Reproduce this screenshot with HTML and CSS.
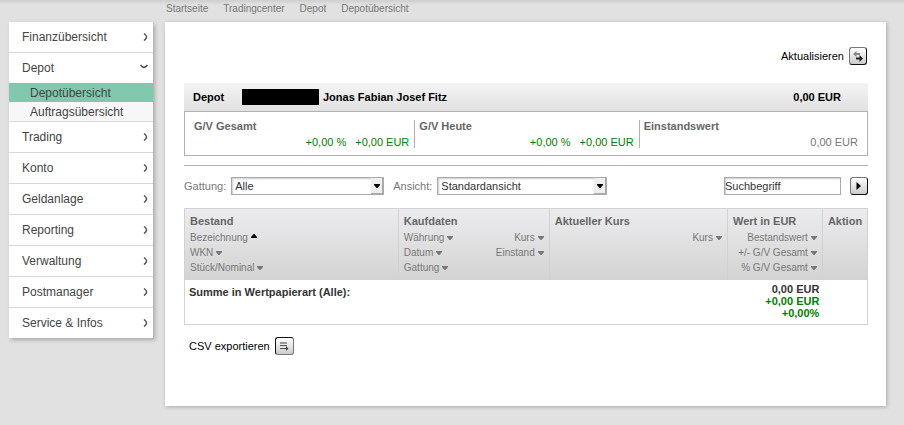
FILE: index.html
```html
<!DOCTYPE html>
<html lang="de">

<head>
    <meta charset="UTF-8">
    <title>Depotübersicht</title>
    <link rel="stylesheet" href="styles.css">
</head>

<body>
    <svg class="defs" width="0" height="0">
        <symbol id="chevron" viewBox="0 0 5 8">
            <path d="M1 0.5 Q3.6 2.5 3.6 4 Q3.6 5.5 1 7.5" fill="none" stroke="#555" stroke-width="1.5" />
        </symbol>
        <symbol id="chevron-open" viewBox="0 0 8 5">
            <path d="M0.5 1 Q2.5 3.4 4 3.4 Q5.5 3.4 7.5 1" fill="none" stroke="#444" stroke-width="1.5" />
        </symbol>
        <symbol id="down" viewBox="0 0 6 4">
            <path d="M0 0 H6 V1 L3.5 4 H2.5 L0 1 Z" fill="currentColor" />
        </symbol>
        <symbol id="up" viewBox="0 0 6 4">
            <path d="M0 4 H6 V3 L3.5 0 H2.5 L0 3 Z" fill="currentColor" />
        </symbol>
    </svg>

    <nav class="breadcrumb">
        <a href="#">Startseite</a>
        <a href="#">Tradingcenter</a>
        <a href="#">Depot</a>
        <a href="#">Depotübersicht</a>
    </nav>

    <div class="page">
        <nav class="menu">
            <ul>
                <li><a href="#">Finanzübersicht <svg class="chevron"><use href="#chevron" /></svg></a></li>
                <li>
                    <a href="#">Depot <svg class="chevron-open"><use href="#chevron-open" /></svg></a>
                    <ul class="submenu">
                        <li><a class="active" href="#">Depotübersicht</a></li>
                        <li><a href="#">Auftragsübersicht</a></li>
                    </ul>
                </li>
                <li><a href="#">Trading <svg class="chevron"><use href="#chevron" /></svg></a></li>
                <li><a href="#">Konto <svg class="chevron"><use href="#chevron" /></svg></a></li>
                <li><a href="#">Geldanlage <svg class="chevron"><use href="#chevron" /></svg></a></li>
                <li><a href="#">Reporting <svg class="chevron"><use href="#chevron" /></svg></a></li>
                <li><a href="#">Verwaltung <svg class="chevron"><use href="#chevron" /></svg></a></li>
                <li><a href="#">Postmanager <svg class="chevron"><use href="#chevron" /></svg></a></li>
                <li><a href="#">Service &amp; Infos <svg class="chevron"><use href="#chevron" /></svg></a></li>
            </ul>
        </nav>

        <main class="content">
            <div class="refresh">
                <label for="refresh">Aktualisieren</label>
                <button class="icon-button" id="refresh" type="button">
                    <svg width="12" height="12" viewBox="0 0 12 12">
                        <path d="M1 4 L4.5 1 V3 H8 V5 H4.5 V7 Z" fill="#888" />
                        <path d="M11 8.5 L7.5 5 V7.5 H4 V9.5 H7.5 V12 Z" fill="#222" />
                    </svg>
                </button>
            </div>

            <div class="depot-bar">
                <span class="depot-label">Depot</span>
                <span class="depot-number"></span>
                <span>Jonas Fabian Josef Fitz</span>
                <span class="depot-total">0,00 EUR</span>
            </div>
            <div class="summary">
                <div class="summary-cell">
                    <strong>G/V Gesamt</strong>
                    <div class="values plus"><span>+0,00 %</span><span>+0,00 EUR</span></div>
                </div>
                <div class="summary-cell">
                    <strong>G/V Heute</strong>
                    <div class="values plus"><span>+0,00 %</span><span>+0,00 EUR</span></div>
                </div>
                <div class="summary-cell">
                    <strong>Einstandswert</strong>
                    <div class="values"><span>0,00 EUR</span></div>
                </div>
            </div>

            <form class="filter">
                <label for="gattung">Gattung:</label>
                <span class="select select-gattung">
                    <select id="gattung">
                        <option>Alle</option>
                    </select>
                    <span class="select-arrow"><svg class="sort-icon"><use href="#down" /></svg></span>
                </span>
                <label for="ansicht">Ansicht:</label>
                <span class="select select-ansicht">
                    <select id="ansicht">
                        <option>Standardansicht</option>
                    </select>
                    <span class="select-arrow"><svg class="sort-icon"><use href="#down" /></svg></span>
                </span>
                <input class="search" type="text" value="Suchbegriff" aria-label="Suchbegriff">
                <button class="icon-button" type="button" aria-label="Suchen">
                    <svg width="6" height="8" viewBox="0 0 6 8">
                        <path d="M0.5 0 L5 4 L0.5 8 Z" fill="#000" />
                    </svg>
                </button>
            </form>

            <table class="positions">
                <colgroup>
                    <col class="col-bestand">
                    <col class="col-kauf">
                    <col class="col-kurs">
                    <col class="col-wert">
                    <col class="col-aktion">
                </colgroup>
                <thead>
                    <tr>
                        <th>Bestand
                            <div class="sort">
                                <a class="sorted" href="#">Bezeichnung<svg class="sort-icon"><use href="#up" /></svg></a>
                                <a href="#">WKN<svg class="sort-icon"><use href="#down" /></svg></a>
                                <a href="#">Stück/Nominal<svg class="sort-icon"><use href="#down" /></svg></a>
                            </div>
                        </th>
                        <th>Kaufdaten
                            <div class="sort-columns">
                                <div class="sort">
                                    <a href="#">Währung<svg class="sort-icon"><use href="#down" /></svg></a>
                                    <a href="#">Datum<svg class="sort-icon"><use href="#down" /></svg></a>
                                    <a href="#">Gattung<svg class="sort-icon"><use href="#down" /></svg></a>
                                </div>
                                <div class="sort right">
                                    <a href="#">Kurs<svg class="sort-icon"><use href="#down" /></svg></a>
                                    <a href="#">Einstand<svg class="sort-icon"><use href="#down" /></svg></a>
                                </div>
                            </div>
                        </th>
                        <th>Aktueller Kurs
                            <div class="sort right">
                                <a href="#">Kurs<svg class="sort-icon"><use href="#down" /></svg></a>
                            </div>
                        </th>
                        <th>Wert in EUR
                            <div class="sort right">
                                <a href="#">Bestandswert<svg class="sort-icon"><use href="#down" /></svg></a>
                                <a href="#">+/- G/V Gesamt<svg class="sort-icon"><use href="#down" /></svg></a>
                                <a href="#">% G/V Gesamt<svg class="sort-icon"><use href="#down" /></svg></a>
                            </div>
                        </th>
                        <th>Aktion</th>
                    </tr>
                </thead>
                <tbody>
                    <tr>
                        <td class="sum-label" colspan="3">Summe in Wertpapierart (Alle):</td>
                        <td class="sum">0,00 EUR<br><span class="plus">+0,00 EUR<br>+0,00%</span></td>
                        <td></td>
                    </tr>
                </tbody>
            </table>

            <div class="export">
                <label for="export">CSV exportieren</label>
                <button class="icon-button" id="export" type="button">
                    <svg width="10" height="10" viewBox="0 0 10 10">
                        <path d="M1 1 H8 V3 H1 Z" fill="#999" />
                        <path d="M1 4.5 H8 M1 7.5 H5" stroke="#555" fill="none" />
                        <path d="M5 7 H7 V5 L9.5 7.5 L7 10 V8 H5 Z" fill="#444" />
                    </svg>
                </button>
            </div>
        </main>
    </div>
</body>

</html>
```
FILE: styles.css
```css
* {
    box-sizing: border-box;
}

body {
    font-family: "Liberation Sans", Arial, sans-serif;
    font-size: 11px;
    margin: 0;
    background: #e1e1e1 linear-gradient(#cfcfcf, #e1e1e1) 0 0 / 100% 5px no-repeat;
    color: #000;
}

a {
    color: inherit;
    text-decoration: none;
}

ul {
    list-style: none;
    margin: 0;
    padding: 0;
}

.defs {
    position: absolute;
}

.breadcrumb {
    display: flex;
    gap: 15px;
    height: 22px;
    padding: 3px 0 0 166px;
    font-size: 10px;
    line-height: 12px;
    color: #777;
}

.page {
    display: flex;
    align-items: flex-start;
    gap: 12px;
    padding: 0 18px 19px 9px;
}

/* left menu */
.menu {
    width: 144px;
    flex: none;
    background-color: #fff;
    box-shadow: 2px 2px 4px rgba(0, 0, 0, 0.25);
    font-size: 12px;
    color: #444;
}

.menu > ul > li {
    border-bottom: 1px solid #d9d9d9;
}

.menu > ul > li:last-child {
    border-bottom: none;
}

.menu > ul > li > a {
    display: flex;
    justify-content: space-between;
    align-items: center;
    height: 30px;
    padding: 0 5px 0 13px;
}

.chevron {
    width: 5px;
    height: 8px;
}

.chevron-open {
    width: 8px;
    height: 5px;
    margin-bottom: 4px;
}

.submenu a {
    display: block;
    padding: 2px 0 0 21px;
    line-height: 17px;
    background-color: #f7f7f7;
}

.submenu .active {
    background-color: #80c9ae;
}

/* main area */
.content {
    flex: 1;
    min-width: 0;
    padding: 25px 18px 51px 19px;
    background-color: #fff;
    box-shadow: 1px 1px 4px rgba(0, 0, 0, 0.25);
}

.refresh,
.export {
    display: flex;
    align-items: center;
    gap: 5px;
}

.refresh {
    justify-content: flex-end;
    margin-bottom: 18px;
    padding-right: 1px;
}

.export {
    margin-top: 12px;
    padding-left: 5px;
}

.icon-button {
    display: flex;
    align-items: center;
    justify-content: center;
    flex: none;
    width: 18px;
    height: 18px;
    padding: 0;
    border: 1px solid #111;
    border-top-color: #777;
    border-left-color: #777;
    border-radius: 3px;
    background: linear-gradient(#fff, #ccc);
}

.export .icon-button {
    width: 19px;
    border-color: #111 #777 #777 #111;
}

.depot-bar {
    display: flex;
    align-items: center;
    height: 28px;
    padding: 0 27px 0 9px;
    background: linear-gradient(#f4f4f4, #e1e1e1);
    font-weight: bold;
}

.depot-label {
    width: 49px;
}

.depot-number {
    width: 77px;
    height: 16px;
    margin-right: 4px;
    background-color: #000;
}

.depot-total {
    margin-left: auto;
}

.summary {
    display: grid;
    grid-template-columns: 1fr 1fr 1fr;
    padding: 8px 4px 7px 5px;
    border: 1px solid #b0b0b0;
    color: #777;
}

.summary-cell {
    padding: 0 5px 0 4px;
    line-height: 13px;
}

.summary-cell + .summary-cell {
    border-left: 1px solid #b0b0b0;
}

.summary strong {
    color: #666;
}

.values {
    display: flex;
    justify-content: flex-end;
    gap: 9px;
    padding-top: 4px;
    line-height: 11px;
}

.plus {
    color: #008000;
}

/* filter row */
.filter {
    display: flex;
    align-items: center;
    margin-top: 9px;
    padding: 11px 0 13px;
    border-top: 1px solid #b0b0b0;
    color: #777;
}

.select {
    position: relative;
    margin: 0 9px 0 5px;
}

.select-gattung {
    width: 153px;
}

.select-ansicht {
    width: 170px;
}

.select select,
.search {
    display: block;
    width: 100%;
    height: 18px;
    margin: 0;
    padding: 0 3px;
    border: 1px solid #aaa;
    border-radius: 0;
    background-color: #fff;
    box-shadow: inset 1px 1px 2px #ccc;
    font: inherit;
    color: #333;
    appearance: none;
}

.select-arrow {
    position: absolute;
    top: 1px;
    right: 1px;
    display: flex;
    align-items: center;
    justify-content: center;
    width: 12px;
    height: 16px;
    border: 1px solid #aaa;
    border-width: 0 1px 1px 0;
    background-color: #eee;
    color: #000;
    pointer-events: none;
}

.search {
    width: 117px;
    margin: 0 9px 0 auto;
    padding: 0;
}

.sort-icon {
    width: 6px;
    height: 4px;
}

/* positions */
.positions {
    width: 100%;
    table-layout: fixed;
    border-collapse: collapse;
    border: 1px solid #d2d2d2;
}

.col-bestand {
    width: 31.3%;
}

.col-kauf {
    width: 22.1%;
}

.col-kurs {
    width: 26.1%;
}

.col-wert {
    width: 13.9%;
}

.positions thead {
    background: linear-gradient(#ececee, #d3d3d3);
}

.positions th {
    height: 71px;
    padding: 5px 5px 4px;
    border-left: 1px solid #d2d2d2;
    line-height: 15px;
    text-align: left;
    vertical-align: top;
    white-space: nowrap;
    color: #666;
}

.sort {
    display: flex;
    flex-direction: column;
    padding-top: 1px;
    font-size: 10px;
    font-weight: normal;
    color: #777;
}

.sort a {
    display: flex;
    align-items: center;
    gap: 3px;
}

.sort .sort-icon {
    margin-top: 1px;
}

.sort .sorted .sort-icon {
    margin: 0 0 4px;
    color: #000;
}

.sort-columns {
    display: flex;
    justify-content: space-between;
}

.right {
    align-items: flex-end;
}

.positions td {
    padding: 3px 3px 5px;
    font-weight: bold;
    line-height: 12px;
    vertical-align: top;
    color: #333;
}

.positions .sum-label {
    padding: 6px 4px;
}

.positions .sum {
    text-align: right;
}
```
